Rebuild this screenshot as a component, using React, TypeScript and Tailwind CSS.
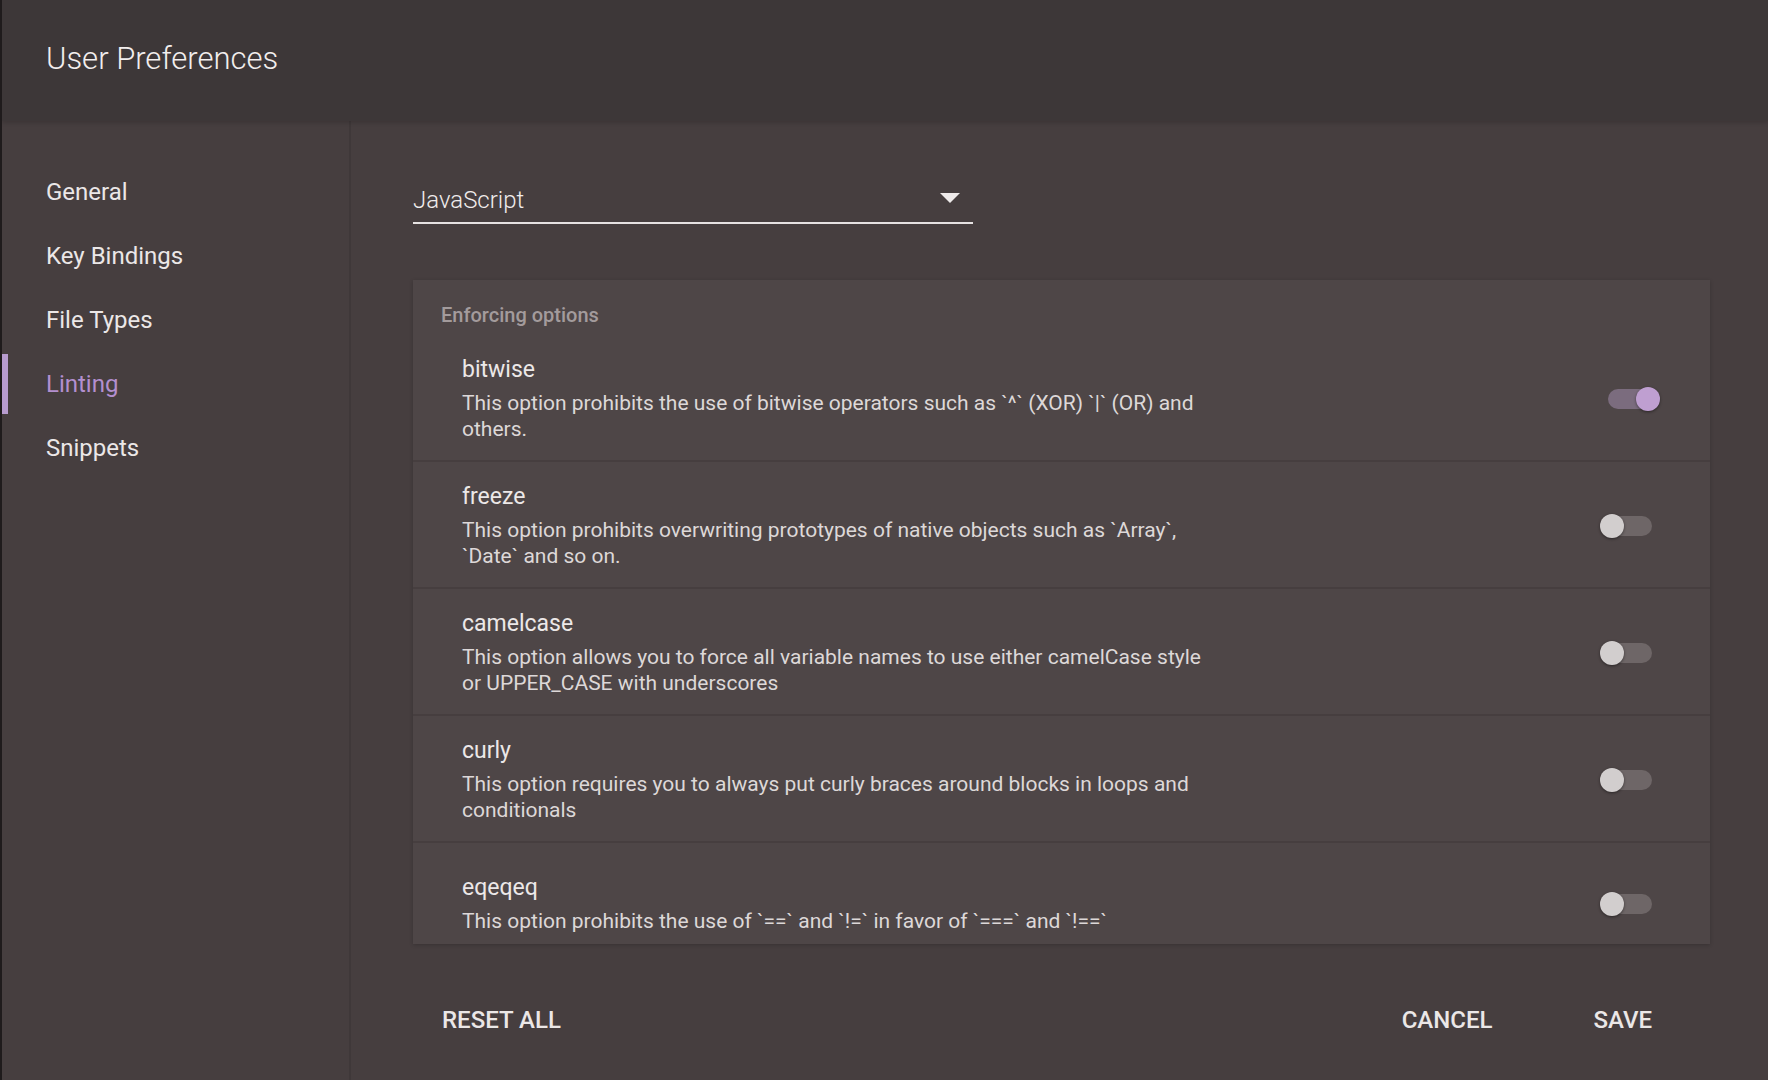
import { useState } from 'react';

const sections = ['General', 'Key Bindings', 'File Types', 'Linting', 'Snippets'];

const options = [
  {
    name: 'bitwise',
    lines: ['This option prohibits the use of bitwise operators such as `^` (XOR) `|` (OR) and', 'others.'],
    on: true,
  },
  {
    name: 'freeze',
    lines: ['This option prohibits overwriting prototypes of native objects such as `Array`,', '`Date` and so on.'],
    on: false,
  },
  {
    name: 'camelcase',
    lines: ['This option allows you to force all variable names to use either camelCase style', 'or UPPER_CASE with underscores'],
    on: false,
  },
  {
    name: 'curly',
    lines: ['This option requires you to always put curly braces around blocks in loops and', 'conditionals'],
    on: false,
  },
  {
    name: 'eqeqeq',
    lines: ['This option prohibits the use of `==` and `!=` in favor of `===` and `!==`'],
    on: false,
  },
];

const Toggle = ({ on }: { on: boolean }) => (
  <div className="relative w-[44px] h-[20px] flex-shrink-0">
    <div className={`absolute inset-0 rounded-full ${on ? 'bg-[#7b6c7e]' : 'bg-[#6e6667]'}`} />
    <div
      className={`absolute top-[-2px] w-[24px] h-[24px] rounded-full shadow-[0_1px_3px_rgba(0,0,0,0.45)] ${
        on ? 'left-[28px] bg-[#bf9fd1]' : 'left-[-8px] bg-[#d2cece]'
      }`}
    />
  </div>
);

const App = () => {
  const [active] = useState('Linting');

  return (
    <div className="w-full h-[1080px] flex flex-col bg-[#463e3f] border-l-2 border-[#1f1b1c] font-['Roboto',sans-serif] overflow-hidden">
      {/* Header */}
      <div className="h-[121px] flex-shrink-0 bg-[#3d3738] flex items-center pl-[44px] shadow-[0_2px_4px_rgba(0,0,0,0.15)] z-10">
        <h1 className="text-[31px] font-light text-[#f2eeee] leading-none pb-[4px]">User Preferences</h1>
      </div>

      <div className="flex flex-1 min-h-0">
        {/* Sidebar */}
        <div className="w-[349px] flex-shrink-0 border-r-2 border-[#3f3839] pt-[41px] flex flex-col gap-[4px]">
          {sections.map((s) => (
            <div key={s} className="relative h-[60px] flex items-center pl-[44px]">
              {s === active && <div className="absolute left-0 top-0 w-[6px] h-[60px] bg-[#b89ccf]" />}
              <span className={`text-[24px] ${s === active ? 'text-[#b38fcf]' : 'text-[#ebe7e7]'}`}>{s}</span>
            </div>
          ))}
        </div>

        {/* Main */}
        <div className="flex-1 pl-[62px] pr-[58px] pt-[63px] flex flex-col">
          <div className="w-[560px] flex items-center justify-between border-b-2 border-[#e6e2e2] pb-[6px]">
            <span className="text-[24px] font-light text-[#f0ecec] leading-[32px]">JavaScript</span>
            <svg width="20" height="10" viewBox="0 0 20 10" className="mr-[13px] mb-[4px]">
              <path d="M0 0 L20 0 L10 10 Z" fill="#eeeaea" />
            </svg>
          </div>

          <div className="mt-[56px] h-[664px] bg-[#4e4647] overflow-hidden shadow-[0_1px_4px_rgba(0,0,0,0.2)]">
            <div className="h-[55px] pt-[24px] pl-[28px]">
              <span className="text-[20px] font-medium text-[#a39b9c] leading-[22px] block">Enforcing options</span>
            </div>
            {options.map((o, i) => (
              <div
                key={o.name}
                className={`flex items-center pl-[49px] pr-[58px] ${
                  i < options.length - 1 ? 'pt-[21px] pb-[18px] border-b-2 border-[#463e3f]' : 'min-h-[120px] pt-[2px]'
                }`}
              >
                <div className="flex-1">
                  <div className="text-[23px] text-[#ece8e8] leading-[28px]">{o.name}</div>
                  <div className="mt-[6px] text-[21px] text-[#ddd8d8] leading-[26px] whitespace-nowrap">
                    {o.lines.map((l, j) => (
                      <div key={j}>{l}</div>
                    ))}
                  </div>
                </div>
                <Toggle on={o.on} />
              </div>
            ))}
          </div>

          {/* Footer */}
          <div className="mt-[52px] flex items-center justify-between">
            <button className="h-[48px] px-[29px] text-[24px] font-medium text-[#ebe7e7] uppercase">Reset All</button>
            <div className="flex items-center gap-[43px] pr-[29px]">
              <button className="h-[48px] px-[29px] text-[24px] font-medium text-[#ebe7e7] uppercase">Cancel</button>
              <button className="h-[48px] px-[29px] text-[24px] font-medium text-[#ebe7e7] uppercase">Save</button>
            </div>
          </div>
        </div>
      </div>
    </div>
  );
};

export default App;
